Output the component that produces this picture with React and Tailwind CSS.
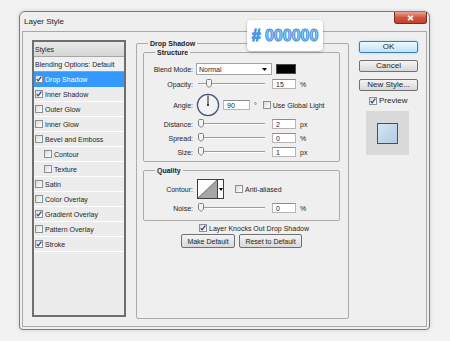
import React from 'react';

const Check = ({ checked }) => (
  <span className="w-[8px] h-[8px] shrink-0 border border-[#8e8f8f] bg-gradient-to-br from-[#d9d9d9] to-white flex items-center justify-center">
    {checked && (
      <svg width="6" height="6" viewBox="0 0 6 6">
        <path d="M0.7 3.1 L2.2 4.8 L5.3 0.6" stroke="#26457e" strokeWidth="1.2" fill="none" />
      </svg>
    )}
  </span>
);

const Thumb = () => (
  <svg width="6" height="9" viewBox="0 0 6 9">
    <path d="M0.5 1.5 Q0.5 0.5 1.5 0.5 H4.5 Q5.5 0.5 5.5 1.5 V6 L3 8.5 L0.5 6 Z" fill="#f4f4f4" stroke="#7d7d7d" />
  </svg>
);

const Slider = ({ pos }) => (
  <div className="relative ml-[5px] w-[67px] h-[10px] flex items-center">
    <div className="w-full h-[2px] border-t border-[#9c9c9c] border-b border-b-white" />
    <span className="absolute top-0" style={{ left: pos }}>
      <Thumb />
    </span>
  </div>
);

const Field = ({ value, className = '' }) => (
  <div className={`h-[10px] bg-white border border-[#b5b5b5] border-t-[#8d8d8d] flex items-center pl-[3px] text-[7px] leading-none ${className}`}>
    {value}
  </div>
);

const Label = ({ children }) => (
  <span className="w-[49px] shrink-0 text-right text-[7px] leading-none">{children}</span>
);

const SliderRow = ({ label, pos, value, unit, className = '' }) => (
  <div className={`h-[10px] flex items-center ${className}`}>
    <Label>{label}</Label>
    <Slider pos={pos} />
    <Field value={value} className="ml-[7px] w-[24px]" />
    <span className="ml-[4px] text-[7px] leading-none">{unit}</span>
  </div>
);

const GroupBox = ({ title, className = '', children }) => (
  <fieldset className={`border border-[#ababab] rounded-[2px] ${className}`}>
    <legend className="ml-[11px] px-[2px] font-bold text-[7px] leading-[9px] text-[#1c1c1c]">{title}</legend>
    {children}
  </fieldset>
);

const PushButton = ({ children, className = '' }) => (
  <div className={`h-[14px] border border-[#707070] rounded-[2px] bg-gradient-to-b from-[#f4f4f4] to-[#d9d9d9] flex items-center justify-center text-[7px] leading-none ${className}`}>
    {children}
  </div>
);

const styles = [
  { name: 'Drop Shadow', checked: true, selected: true },
  { name: 'Inner Shadow', checked: true },
  { name: 'Outer Glow' },
  { name: 'Inner Glow' },
  { name: 'Bevel and Emboss' },
  { name: 'Contour', sub: true },
  { name: 'Texture', sub: true },
  { name: 'Satin' },
  { name: 'Color Overlay' },
  { name: 'Gradient Overlay', checked: true },
  { name: 'Pattern Overlay' },
  { name: 'Stroke', checked: true },
];

export default function App() {
  return (
    <div className="relative w-[450px] h-[341px] overflow-hidden bg-[#f2f2f2] pt-[11px] pl-[19px] font-['Liberation_Sans',Arial,sans-serif] text-[#1e1e1e]">
      {/* dialog window */}
      <div className="w-[411px] h-[319px] flex flex-col border border-[#7b7b7b] rounded-t-[6px] rounded-b-[4px] bg-[#efefef] shadow-[0_0_4px_rgba(0,0,0,0.15)]">
        <div className="h-[19px] flex justify-between pl-[4px] pr-[2px]">
          <span className="self-center text-[8px] leading-none text-[#222]">Layer Style</span>
          <div className="w-[33px] h-[12px] rounded-b-[3px] border border-t-0 border-[#7c2a1f] bg-gradient-to-b from-[#e7a394] via-[#d0563f] to-[#c3412b] flex items-center justify-center">
            <svg width="7" height="6" viewBox="0 0 7 6">
              <path d="M1 0.8 L6 5.2 M6 0.8 L1 5.2" stroke="#fff" strokeWidth="1.6" />
            </svg>
          </div>
        </div>

        <div className="flex-1 mx-[2px] mb-[2px] border border-[#a8a8a8] bg-[#efefef] flex items-start">
          {/* Styles list */}
          <div className="ml-[9px] mt-[8px] w-[94px] h-[277px] border-2 border-[#6e6e6e] bg-[#ececec] flex flex-col text-[7px] leading-none">
            <div className="h-[15px] shrink-0 flex items-center pl-[1px] bg-gradient-to-b from-[#e9e9e9] to-[#d6d6d6] border-b border-[#a6a6a6]">
              Styles
            </div>
            <div className="h-[15px] shrink-0 flex items-center pl-[1px] bg-[#f0f0f0] border-b border-[#9d9d9d]">
              Blending Options: Default
            </div>
            {styles.map((s) => (
              <div
                key={s.name}
                className={`h-[15px] shrink-0 flex items-center border-b ${s.sub ? 'pl-[10px]' : 'pl-[1px]'} ${s.selected ? 'bg-[#3399ff] text-white border-[#3399ff]' : 'border-white'}`}
              >
                <Check checked={s.checked} />
                <span className="ml-[2px]">{s.name}</span>
              </div>
            ))}
          </div>

          {/* Drop Shadow panel */}
          <GroupBox title="Drop Shadow" className="ml-[10px] mt-[7px] w-[213px] h-[280px]">
            <div className="pl-[6px] pr-[8px]">
              <GroupBox title="Structure">
                <div className="pt-[6px] pb-[4px]">
                  <div className="h-[12px] flex items-center">
                    <Label>Blend Mode:</Label>
                    <div className="ml-[3px] w-[76px] h-[12px] bg-white border border-[#a3a3a3] flex items-center justify-between pl-[2px] pr-[4px] text-[7px] leading-none">
                      <span>Normal</span>
                      <svg width="5" height="3" viewBox="0 0 5 3">
                        <path d="M0 0 H5 L2.5 3 Z" fill="#000" />
                      </svg>
                    </div>
                    <div className="ml-[4px] w-[20px] h-[10px] bg-black border border-[#4a4a4a]" />
                  </div>
                  <SliderRow label="Opacity:" pos={8} value="15" unit="%" className="mt-[4px]" />
                  <div className="mt-[4px] h-[24px] flex items-center">
                    <Label>Angle:</Label>
                    <svg className="ml-[3px]" width="24" height="24" viewBox="0 0 24 24">
                      <circle cx="12" cy="12" r="10.6" fill="#f3f3f3" stroke="#44597a" strokeWidth="1.3" />
                      <path d="M12 12 V2.5" stroke="#1a1a1a" strokeWidth="1" />
                      <circle cx="12" cy="12" r="1" fill="#1a1a1a" />
                    </svg>
                    <Field value="90" className="ml-[3px] w-[27px]" />
                    <span className="ml-[4px] text-[7px] leading-none">°</span>
                    <span className="ml-[6px]"><Check /></span>
                    <span className="ml-[2px] text-[7px] leading-none">Use Global Light</span>
                  </div>
                  <SliderRow label="Distance:" pos={0} value="2" unit="px" className="mt-[2px]" />
                  <SliderRow label="Spread:" pos={0} value="0" unit="%" className="mt-[4px]" />
                  <SliderRow label="Size:" pos={0} value="1" unit="px" className="mt-[4px]" />
                </div>
              </GroupBox>

              <GroupBox title="Quality" className="mt-[4px]">
                <div className="pt-[4px] pb-[7px]">
                  <div className="h-[20px] flex items-center">
                    <Label>Contour:</Label>
                    <div className="ml-[4px] w-[27px] h-[20px] border border-[#3d3d3d] bg-white flex">
                      <svg width="19" height="18" viewBox="0 0 19 18">
                        <rect width="19" height="18" fill="#fff" />
                        <path d="M0 18 L19 0 V18 Z" fill="#a6a6a6" />
                        <path d="M0 18 L19 0" stroke="#555" strokeWidth="0.8" />
                      </svg>
                      <div className="flex-1 border-l border-[#3d3d3d] flex items-center justify-center">
                        <svg width="4" height="3" viewBox="0 0 4 3">
                          <path d="M0 0 H4 L2 3 Z" fill="#000" />
                        </svg>
                      </div>
                    </div>
                    <span className="ml-[11px]"><Check /></span>
                    <span className="ml-[2px] text-[7px] leading-none">Anti-aliased</span>
                  </div>
                  <SliderRow label="Noise:" pos={0} value="0" unit="%" className="mt-[4px]" />
                </div>
              </GroupBox>

              <div className="mt-[3px] h-[8px] pl-[56px] flex items-center">
                <Check checked />
                <span className="ml-[2px] text-[7px] leading-none">Layer Knocks Out Drop Shadow</span>
              </div>
              <div className="mt-[2px] flex justify-center gap-[4px]">
                <PushButton className="w-[54px]">Make Default</PushButton>
                <PushButton className="w-[63px]">Reset to Default</PushButton>
              </div>
            </div>
          </GroupBox>

          {/* right column */}
          <div className="ml-[10px] mt-[9px] w-[59px] flex flex-col text-[8px] leading-none">
            <div className="h-[12px] border border-[#3c7fb1] rounded-[2px] bg-gradient-to-b from-[#eef8fe] to-[#bfe4fa] shadow-[0_0_2px_#7cc8f2] flex items-center justify-center">
              OK
            </div>
            <div className="mt-[7px] h-[12px] border border-[#707070] rounded-[2px] bg-gradient-to-b from-[#f4f4f4] to-[#d8d8d8] flex items-center justify-center">
              Cancel
            </div>
            <div className="mt-[7px] h-[12px] border border-[#707070] rounded-[2px] bg-gradient-to-b from-[#f4f4f4] to-[#d8d8d8] flex items-center justify-center">
              New Style...
            </div>
            <div className="mt-[6px] h-[8px] pl-[10px] flex items-center">
              <Check checked />
              <span className="ml-[2px]">Preview</span>
            </div>
            <div className="mt-[6px] ml-[7px] w-[43px] h-[44px] bg-[#d9d9d9] flex items-center justify-center">
              <div className="w-[21px] h-[21px] border border-[#4f4f4f] bg-gradient-to-br from-[#d6e4f2] to-[#b3cbe3]" />
            </div>
          </div>
        </div>
      </div>

      {/* hex colour callout */}
      <div className="absolute left-[247px] top-[20px] w-[76px] h-[31px] bg-white rounded-[4px] shadow-[0_1px_3px_rgba(0,0,0,0.3)] flex items-center justify-center">
        <span className="font-bold text-[16px] leading-none text-[#a9d5f5] [-webkit-text-stroke:1px_#3b8ee0]"># 000000</span>
      </div>
    </div>
  );
}
